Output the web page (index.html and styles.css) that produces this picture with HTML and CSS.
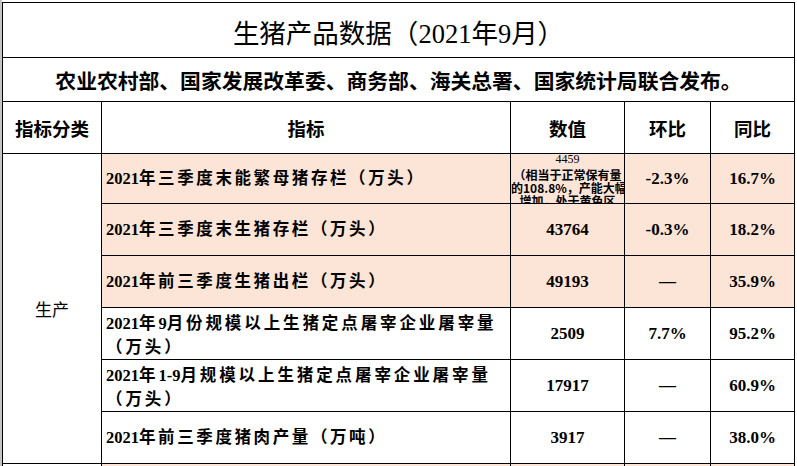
FILE: index.html
```html
<!DOCTYPE html>
<html lang="zh-CN">
<head>
<meta charset="utf-8">
<title>生猪产品数据</title>
<link rel="stylesheet" href="styles.css">
</head>
<body>
<div class="sheet">
  <div class="cell title"><span>生猪产品数据（<span class="n">2021</span>年<span class="n">9</span>月）</span></div>
  <div class="cell subtitle"><span>农业农村部、国家发展改革委、商务部、海关总署、国家统计局联合发布。</span></div>

  <div class="cell head">指标分类</div>
  <div class="cell head">指标</div>
  <div class="cell head">数值</div>
  <div class="cell head">环比</div>
  <div class="cell head">同比</div>

  <div class="cell category">生产</div>

  <div class="cell label peach"><span class="txt"><span class="n">2021</span>年三季度末能繁母猪存栏（万头）</span></div>
  <div class="cell note peach">
    <div class="note-inner">
      <div class="note-num">4459</div>
      <div>（相当于正常保有量</div>
      <div>的108.8%，产能大幅</div>
      <div>增加，处于黄色区</div>
      <div>域）</div>
    </div>
  </div>
  <div class="cell val peach">-2.3%</div>
  <div class="cell val peach">16.7%</div>

  <div class="cell label peach"><span class="txt"><span class="n">2021</span>年三季度末生猪存栏（万头）</span></div>
  <div class="cell val peach">43764</div>
  <div class="cell val peach">-0.3%</div>
  <div class="cell val peach">18.2%</div>

  <div class="cell label peach"><span class="txt"><span class="n">2021</span>年前三季度生猪出栏（万头）</span></div>
  <div class="cell val peach">49193</div>
  <div class="cell val peach">—</div>
  <div class="cell val peach">35.9%</div>

  <div class="cell label wide"><span class="txt"><span class="n">2021</span>年<span class="n">9</span>月份规模以上生猪定点屠宰企业屠宰量<br>（万头）</span></div>
  <div class="cell val">2509</div>
  <div class="cell val">7.7%</div>
  <div class="cell val">95.2%</div>

  <div class="cell label wide"><span class="txt"><span class="n">2021</span>年<span class="n">1-9</span>月规模以上生猪定点屠宰企业屠宰量<br>（万头）</span></div>
  <div class="cell val">17917</div>
  <div class="cell val">—</div>
  <div class="cell val">60.9%</div>

  <div class="cell label"><span class="txt"><span class="n">2021</span>年前三季度猪肉产量（万吨）</span></div>
  <div class="cell val">3917</div>
  <div class="cell val">—</div>
  <div class="cell val">38.0%</div>

  <div class="cell"></div>
  <div class="cell peach"></div>
  <div class="cell peach"></div>
  <div class="cell peach"></div>
  <div class="cell peach"></div>
</div>
</body>
</html>
```

FILE: styles.css
```css
html, body {
  margin: 0;
  padding: 0;
}

body {
  width: 797px;
  height: 466px;
  overflow: hidden;
  background: linear-gradient(to right, #c4c4c4 0, #c4c4c4 2px, #ffffff 2px);
  font-family: "Liberation Serif", "Noto Sans CJK SC", serif;
  color: #000;
}

.sheet {
  margin: 2px 0 0 2px;
  width: 793px;
  display: grid;
  grid-template-columns: 98px 408px 113px 85px 83px;
  grid-template-rows: 54px 43px 51px 49px 51px 51px 51px 51px 51px 20px;
  gap: 1px;
  padding: 1px;
  box-sizing: border-box;
  background: #000;
}

.cell {
  background: #fff;
  display: flex;
  align-items: center;
  justify-content: center;
  overflow: hidden;
  min-width: 0;
}

.peach {
  background: #fce4d6;
}

.title {
  grid-column: 1 / span 5;
  font-family: "Liberation Serif", "Noto Sans CJK SC", serif;
  font-size: 26.5px;
  font-weight: 400;
  padding-top: 2px;
}

.subtitle {
  grid-column: 1 / span 5;
  font-family: "Noto Sans CJK SC", sans-serif;
  font-size: 20.8px;
  font-weight: 700;
}

.head {
  font-family: "Noto Sans CJK SC", sans-serif;
  font-size: 18.5px;
  font-weight: 700;
}

.category {
  grid-row: 4 / span 6;
  grid-column: 1;
  font-family: "Noto Sans CJK SC", sans-serif;
  font-size: 17px;
  font-weight: 400;
}

.label {
  justify-content: flex-start;
  padding-left: 4px;
  font-family: "Liberation Serif", "Noto Sans CJK SC", serif;
  font-size: 16.5px;
  font-weight: 700;
  letter-spacing: 2.6px;
  line-height: 24px;
}

.txt {
  display: block;
  white-space: nowrap;
}

.label.wide {
  letter-spacing: 2.9px;
  padding-top: 4px;
}

.n {
  letter-spacing: 0;
  font-family: "Liberation Serif", serif;
}

.val {
  font-family: "Liberation Serif", "Noto Sans CJK SC", serif;
  font-size: 17px;
  font-weight: 700;
}

.note {
  align-items: flex-start;
}

.note-inner {
  margin-top: -3px;
  width: 100%;
  text-align: center;
  font-family: "Noto Sans CJK SC", sans-serif;
  font-size: 12px;
  font-weight: 700;
  line-height: 13px;
  white-space: nowrap;
}

.note-num {
  font-family: "Liberation Serif", serif;
  font-weight: 400;
  font-size: 12px;
  line-height: 17px;
}
```
